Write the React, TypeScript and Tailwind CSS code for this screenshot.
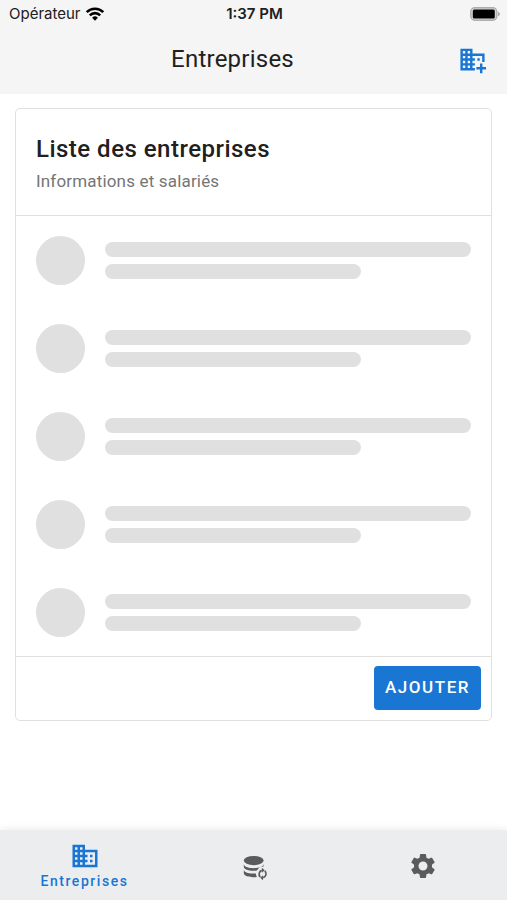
import { MdBusiness, MdSettings } from "react-icons/md";

const rows = [1, 2, 3, 4, 5];

function WifiIcon() {
  return (
    <svg viewBox="0 0 20 14" className="w-5 h-3.5" fill="none" stroke="#000" strokeWidth="2.6">
      <path d="M1.7 5.1a11.8 11.8 0 0 1 16.6 0" />
      <path d="M4.8 8.3a7.4 7.4 0 0 1 10.4 0" />
      <path d="M10 13.8 7.1 10.8a4.1 4.1 0 0 1 5.8 0z" fill="#000" stroke="none" />
    </svg>
  );
}

function BatteryIcon() {
  return (
    <svg viewBox="0 0 30 15" className="w-[30px] h-[15px]">
      <rect x="0.8" y="0.8" width="26" height="12.4" rx="4" fill="#d6d6d6" stroke="#adadad" strokeWidth="1.4" />
      <rect x="2.8" y="2.5" width="22" height="9" rx="1.5" fill="#000" />
      <path d="M28 4.7v4.6q2-.8 2-2.3t-2-2.3z" fill="#adadad" />
    </svg>
  );
}

function BusinessAddIcon() {
  return (
    <svg viewBox="0 0 24 24" className="w-[29px] h-[29px]" fill="currentColor">
      <path d="M12 7V3H2v18h12v-2h-2v-2h2v-2h-2v-2h2v-2h-2V9h8v5h2V7H12zM6 19H4v-2h2v2zm0-4H4v-2h2v2zm0-4H4V9h2v2zm0-4H4V5h2v2zm4 12H8v-2h2v2zm0-4H8v-2h2v2zm0-4H8V9h2v2zm0-4H8V5h2v2z" />
      <path d="M16 11h2v2h-2zM18.2 15.3h2v3h3v2h-3v3h-2v-3h-3v-2h3z" />
    </svg>
  );
}

function DatabaseSyncIcon() {
  return (
    <svg viewBox="-2 -1 29 29" className="w-[29px] h-[29px]" fill="#5b5b5b">
      <ellipse cx="12.7" cy="7.6" rx="9.9" ry="4.6" />
      <path d="M2.8 11c0 2.4 4.4 4.2 9.9 4.2s9.9-1.8 9.9-4.2v2.4a7.6 7.6 0 0 0-6.6 4c-6.3 1.1-13.2-.5-13.2-3.6z" />
      <path d="M2.8 16.8c0 2.6 6 4.4 12 3.6.1 1.3.4 2.4 1.1 3.5-6.6 1-13.1-.6-13.1-3.9z" />
      <path
        d="M19.3 24a4 4 0 0 1 1.4-6.6M23.8 17.8a4 4 0 0 1-1.6 6.8"
        fill="none"
        stroke="#5b5b5b"
        strokeWidth="1.7"
      />
      <path d="M20.9 14.8v5l2.8-2.5zM22 22.2v5l-2.8-2.5z" />
    </svg>
  );
}

function SkeletonRow() {
  return (
    <li className="flex items-center gap-5 h-22 px-5">
      <div className="size-[49px] shrink-0 rounded-full bg-[#e0e0e0]" />
      <div className="flex-1 flex flex-col gap-[7px]">
        <div className="h-[15px] rounded-full bg-[#e0e0e0]" />
        <div className="h-[15px] w-[70%] rounded-full bg-[#e0e0e0]" />
      </div>
    </li>
  );
}

export default function App() {
  return (
    <div className="min-h-screen flex flex-col bg-white text-[#202020] font-[Roboto,sans-serif]">
      {/* Header */}
      <header className="bg-[#f5f5f5]">
        <div className="grid grid-cols-3 items-center h-7 pl-[9px] pr-[7px] font-[Inter,sans-serif] text-[15px]">
          <div className="flex items-center gap-1">
            <span>Opérateur</span>
            <WifiIcon />
          </div>
          <span className="text-center font-semibold">1:37 PM</span>
          <div className="flex justify-end">
            <BatteryIcon />
          </div>
        </div>

        <div className="flex items-center gap-2 h-[66px] pl-[15px] pr-5 pb-1">
          <h1 className="flex-1 text-center text-2xl tracking-[0.01em]">Entreprises</h1>
          <button type="button" aria-label="Ajouter une entreprise" className="text-[#1976d2]">
            <BusinessAddIcon />
          </button>
        </div>
      </header>

      {/* Company list */}
      <main className="flex-1 px-[15px] pt-3.5 pb-6">
        <section className="border border-[#e0e0e0] rounded-[5px]">
          <div className="px-5 pt-6 pb-[22px] border-b border-[#e0e0e0]">
            <h2 className="text-2xl leading-8 font-medium tracking-[0.02em]">Liste des entreprises</h2>
            <p className="text-[17px] leading-6 mt-1 text-[#757575] tracking-[0.01em]">
              Informations et salariés
            </p>
          </div>

          <ul aria-label="Chargement">
            {rows.map((row) => (
              <SkeletonRow key={row} />
            ))}
          </ul>

          <div className="flex justify-end p-2.5 pt-[9px] border-t border-[#e0e0e0]">
            <button
              type="button"
              className="h-11 px-[11px] rounded bg-[#1976d2] text-white text-[17px] font-medium tracking-[0.09em]"
            >
              AJOUTER
            </button>
          </div>
        </section>
      </main>

      {/* Bottom tabs */}
      <nav className="grid grid-cols-3 h-[70px] pt-0.5 bg-[#ecedef] shadow-[0_-1px_8px_rgba(0,0,0,0.08)]">
        <a href="#entreprises" className="flex flex-col items-center justify-center text-[#1976d2]">
          <MdBusiness className="size-[30px]" />
          <span className="text-sm leading-5 font-medium tracking-[0.11em]">Entreprises</span>
        </a>
        <a href="#donnees" aria-label="Données" className="flex items-center justify-center">
          <DatabaseSyncIcon />
        </a>
        <a href="#parametres" aria-label="Paramètres" className="flex items-center justify-center text-[#5b5b5b]">
          <MdSettings className="size-[30px]" />
        </a>
      </nav>
    </div>
  );
}
